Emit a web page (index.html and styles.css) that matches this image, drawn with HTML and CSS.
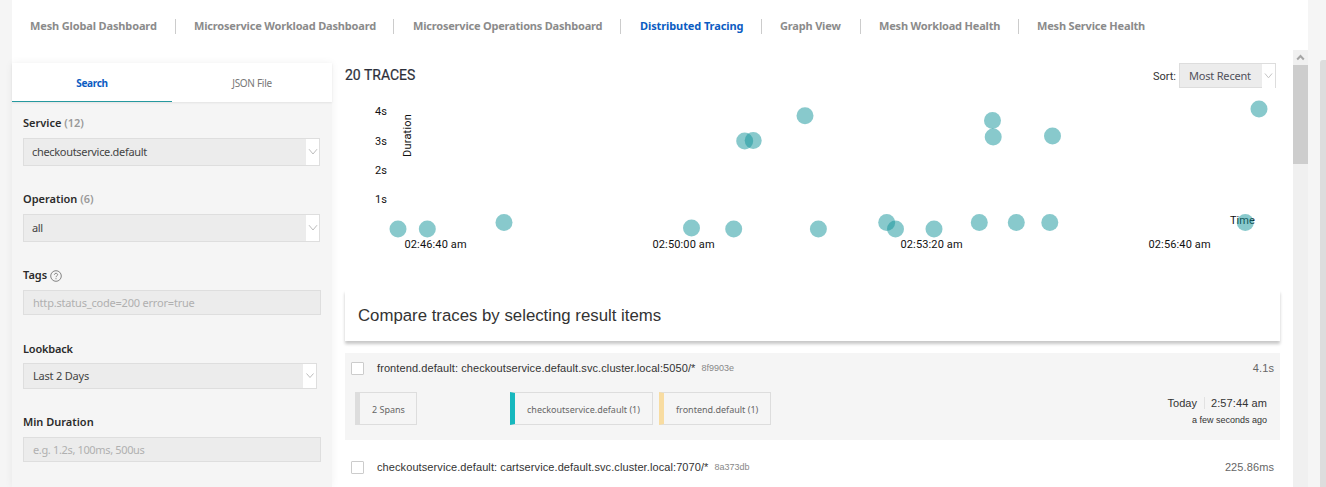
FILE: index.html
```html
<!DOCTYPE html>
<html lang="en">
<head>
<meta charset="utf-8">
<title>Distributed Tracing</title>
<link rel="stylesheet" href="styles.css">
</head>
<body>
<div class="page">
  <div class="app">
    <nav class="nav">
      <a class="nav-item"><span>Mesh Global Dashboard</span></a>
      <a class="nav-item"><span>Microservice Workload Dashboard</span></a>
      <a class="nav-item"><span>Microservice Operations Dashboard</span></a>
      <a class="nav-item active"><span>Distributed Tracing</span></a>
      <a class="nav-item"><span>Graph View</span></a>
      <a class="nav-item"><span>Mesh Workload Health</span></a>
      <a class="nav-item"><span>Mesh Service Health</span></a>
    </nav>
    <div class="content">
      <aside class="sidebar">
        <div class="tabs">
          <div class="tab selected">Search</div>
          <div class="tab">JSON File</div>
        </div>
        <form class="form">
          <div class="field service">
            <div class="label">Service <span class="count">(12)</span></div>
            <div class="select"><span class="value">checkoutservice.default</span><span class="arrow"><svg width="10" height="8" viewBox="0 0 10 8"><path d="M1 1.2 5 6l4-4.8"/></svg></span></div>
          </div>
          <div class="field operation">
            <div class="label">Operation <span class="count">(6)</span></div>
            <div class="select"><span class="value">all</span><span class="arrow"><svg width="10" height="8" viewBox="0 0 10 8"><path d="M1 1.2 5 6l4-4.8"/></svg></span></div>
          </div>
          <div class="field tags">
            <div class="label">Tags <svg class="help" width="12" height="12" viewBox="0 0 12 12"><circle cx="6" cy="6" r="5.3"/><path d="M4.4 4.8c0-2 3.2-2 3.2-.1C7.6 5.9 6 5.9 6 7.2M6 8.2v1"/></svg></div>
            <div class="input">http.status_code=200 error=true</div>
          </div>
          <div class="field lookback">
            <div class="label tight">Lookback</div>
            <div class="select small"><span class="value">Last 2 Days</span><span class="arrow"><svg width="10" height="8" viewBox="0 0 10 8"><path d="M1.5 1.5 5 5.5l3.5-4"/></svg></span></div>
          </div>
          <div class="field duration">
            <div class="label">Min Duration</div>
            <div class="input example">e.g. 1.2s, 100ms, 500us</div>
          </div>
        </form>
      </aside>
      <main class="results">
        <header class="results-head">
          <h2 class="title">20 TRACES</h2>
          <div class="sort">
            <span class="sort-label">Sort:</span>
            <div class="sort-select"><span class="sort-value">Most Recent</span><span class="sort-arrow"><svg width="9" height="8" viewBox="0 0 10 8"><path d="M1 1.2 5 6l4-4.8"/></svg></span></div>
          </div>
        </header>
        <svg class="plot" width="935" height="200" viewBox="345 90 935 200">
          <g class="axis">
            <text x="375" y="115">4s</text>
            <text x="375" y="145">3s</text>
            <text x="375" y="174">2s</text>
            <text x="375" y="203">1s</text>
            <text class="axis-name" transform="translate(411 157) rotate(-90)">Duration</text>
            <text class="axis-time" x="404.5" y="248">02:46:40 am</text>
            <text class="axis-time" x="652.5" y="248">02:50:00 am</text>
            <text class="axis-time" x="900.5" y="248">02:53:20 am</text>
            <text class="axis-time" x="1148.5" y="248">02:56:40 am</text>
            <text x="1230" y="224">Time</text>
          </g>
          <g class="dots">
            <circle cx="398" cy="229" r="8.5"/><circle cx="427.3" cy="229" r="8.5"/>
            <circle cx="504" cy="222.4" r="8.5"/><circle cx="691.5" cy="228" r="8.5"/>
            <circle cx="733.7" cy="229" r="8.5"/><circle cx="744.7" cy="141" r="8.5"/>
            <circle cx="753.2" cy="140.5" r="8.5"/><circle cx="805" cy="115.7" r="8.5"/>
            <circle cx="818.4" cy="229" r="8.5"/><circle cx="886.7" cy="222.4" r="8.5"/>
            <circle cx="895.5" cy="229" r="8.5"/><circle cx="934" cy="229" r="8.5"/>
            <circle cx="979.3" cy="222.4" r="8.5"/><circle cx="1016.3" cy="222.4" r="8.5"/>
            <circle cx="1049.8" cy="222.4" r="8.5"/><circle cx="992.5" cy="120.5" r="8.5"/>
            <circle cx="993.2" cy="137" r="8.5"/><circle cx="1052.5" cy="136" r="8.5"/>
            <circle cx="1259" cy="109" r="8.5"/><circle cx="1245.3" cy="222.4" r="8.5"/>
          </g>
        </svg>
        <div class="compare"><span>Compare traces by selecting result items</span></div>
        <section class="trace shaded">
          <div class="trace-head">
            <span class="check"></span>
            <span class="trace-name">frontend.default: checkoutservice.default.svc.cluster.local:5050/*</span>
            <span class="trace-id">8f9903e</span>
            <span class="trace-time">4.1s</span>
          </div>
          <div class="trace-body">
            <div class="tag spans"><span>2 Spans</span></div>
            <div class="tag checkout"><span>checkoutservice.default (1)</span></div>
            <div class="tag frontend"><span>frontend.default (1)</span></div>
            <div class="when">
              <div class="when-line"><span class="day">Today</span><span class="clock">2:57:44 am</span></div>
              <div class="ago">a few seconds ago</div>
            </div>
          </div>
        </section>
        <section class="trace last">
          <div class="trace-head">
            <span class="check"></span>
            <span class="trace-name">checkoutservice.default: cartservice.default.svc.cluster.local:7070/*</span>
            <span class="trace-id">8a373db</span>
            <span class="trace-time">225.86ms</span>
          </div>
        </section>
      </main>
      <div class="scrollbar">
        <div class="scroll-up"><svg width="9" height="7" viewBox="0 0 9 7"><path d="M1.2 5.5 4.5 2l3.3 3.5"/></svg></div>
        <div class="scroll-thumb"></div>
      </div>
    </div>
  </div>
  <div class="outer-scroll"></div>
</div>
</body>
</html>
```

FILE: styles.css
```css
* { box-sizing: border-box; }
body { margin: 0; background: #f5f5f5; font-family: "Noto Sans", sans-serif; font-size: 11px; overflow: hidden; }
.page { display: flex; width: 1326px; height: 487px; padding-left: 12px; }
.app { width: 1296px; background: #fff; }
.outer-scroll { width: 6px; margin: 60px 0 0 12px; background: #ddd; border-radius: 3px 0 0 0; }

.nav { display: flex; height: 50px; padding-top: 19px; }
.nav-item { height: 15px; padding-left: 18px; border-right: 1px solid #ccc; font-weight: 700; font-size: 11px; line-height: 13px; letter-spacing: -0.18px; color: #8b8b8b; white-space: nowrap; }
.nav-item:nth-child(1) { width: 164px; letter-spacing: -0.14px; }
.nav-item:nth-child(2) { width: 218px; }
.nav-item:nth-child(3) { width: 227px; padding-left: 19px; letter-spacing: -0.2px; }
.nav-item:nth-child(4) { width: 141px; padding-left: 19px; letter-spacing: -0.1px; }
.nav-item:nth-child(5) { width: 99px; }
.nav-item:nth-child(6) { width: 158px; }
.nav-item:last-child { border-right: 0; }
.nav-item.active { color: #0b5cc2; }

.content { display: flex; height: 437px; }
.sidebar { width: 320px; margin-top: 13px; background: #f5f5f5; box-shadow: 0 0 8px rgba(0,0,0,.06); }
.tabs { display: flex; height: 39px; background: #fff; box-shadow: 0 1px 2px rgba(0,0,0,.08); }
.tab { width: 160px; padding-top: 1px; text-align: center; font-size: 10px; line-height: 39px; letter-spacing: -0.3px; color: #777; }
.tab.selected { color: #0b5cc2; font-weight: 700; border-bottom: 1px solid #26999f; }
.form { padding: 12px 11px 0; }
.label { font-weight: 600; font-size: 11px; line-height: 18px; color: #2b2b2b; white-space: nowrap; }
.tight { letter-spacing: -0.2px; }
.count { color: #999; }
.service { height: 76px; }
.operation { height: 76px; }
.tags { height: 74px; }
.lookback { height: 73px; }
.select { display: flex; justify-content: space-between; width: 297px; height: 28px; margin-top: 6px; border: 1px solid #dedede; background: #ececec; color: #444; }
.value { padding-left: 8px; line-height: 26px; font-size: 11px; letter-spacing: -0.32px; }
.arrow { display: flex; align-items: center; justify-content: center; width: 13px; background: #fff; }
.arrow path, .sort-arrow path { fill: none; stroke: #bdbdbd; stroke-width: 1; }
.input { width: 298px; height: 25px; margin-top: 6px; border: 1px solid #dedede; background: #ececec; padding-left: 9px; font-size: 11px; line-height: 24px; letter-spacing: -0.2px; color: #b0b0b0; }
.example { letter-spacing: -0.35px; }
.select.small { width: 294px; height: 26px; margin-top: 5px; }
.small .value { padding-left: 9px; line-height: 24px; letter-spacing: -0.2px; }
.help { vertical-align: -3px; }
.help circle, .help path { fill: none; stroke: #777; stroke-width: .9; }

.results { width: 961px; height: 437px; padding-left: 13px; }
.results-head { display: flex; justify-content: space-between; height: 40px; width: 931px; padding-top: 13px; }
.title { margin: 0; font: 400 14px/25px Roboto, sans-serif; color: #2c2f3a; -webkit-text-stroke: .2px #2c2f3a; }
.sort { display: flex; }
.sort-label { margin-right: 3px; font: 11px/27px Roboto, sans-serif; color: #333; }
.sort-select { display: flex; width: 97px; height: 25px; border: 1px solid #ddd; background: #ececec; }
.sort-value { width: 82px; padding-left: 9px; font-size: 11px; line-height: 24px; letter-spacing: -0.2px; color: #50505a; white-space: nowrap; }
.sort-arrow { flex: 1; display: flex; align-items: center; justify-content: center; height: 24px; background: #fff; }
.plot { display: block; }
.axis { font: 11px Roboto, sans-serif; fill: #111; }
.axis-time { letter-spacing: .13px; }
.axis-name { letter-spacing: .2px; }
.dots { fill: #12939a; }
.dots circle { opacity: .5; }

.compare { width: 935px; height: 51px; padding-left: 13px; background: #fff; box-shadow: 0 3px 3px rgba(0,0,0,.22); font: 16.8px/52px "Liberation Sans", sans-serif; color: #333; }
.trace { width: 935px; height: 87px; margin-top: 12px; font-family: "Liberation Sans", sans-serif; }
.last { height: 35px; }
.shaded { background: #f5f5f5; }
.trace-head { display: flex; align-items: center; height: 30px; padding: 0 6px; }
.check { width: 13px; height: 13px; border: 1px solid #ccc; border-radius: 1px; background: #fff; }
.trace-name { margin-left: 13px; font-size: 11px; letter-spacing: .09px; color: #333; white-space: nowrap; }
.trace-id { margin-left: 6px; font-size: 9px; color: #888; }
.trace-time { margin-left: auto; font-size: 11px; letter-spacing: .1px; color: #666; }
.trace-body { display: flex; align-items: flex-start; padding: 9px 13px 0 10px; }
.tag { height: 33px; border: 1px solid #ddd; border-left-width: 5px; font: 9px/33px "Noto Sans", sans-serif; color: #666; padding-left: 12px; white-space: nowrap; }
.spans { width: 62px; margin-right: 93px; }
.checkout { width: 143px; margin-right: 6px; border-left-color: #17b8be; }
.frontend { width: 112px; border-left-color: #f8dca1; }
.when { margin-left: auto; text-align: right; color: #333; }
.when-line { font-size: 11px; line-height: 23px; }
.clock { letter-spacing: .1px; }
.day { padding-right: 7px; margin-right: 6px; border-right: 1px solid #e2e2e2; }
.ago { font-size: 9px; line-height: 10px; }

.scrollbar { width: 15px; background: #f0f0f0; }
.scroll-up { display: flex; justify-content: center; height: 15px; padding-top: 4px; }
.scroll-up path { fill: none; stroke: #a5a5a5; stroke-width: 2; }
.scroll-thumb { height: 99px; background: #cdcdcd; }
```
